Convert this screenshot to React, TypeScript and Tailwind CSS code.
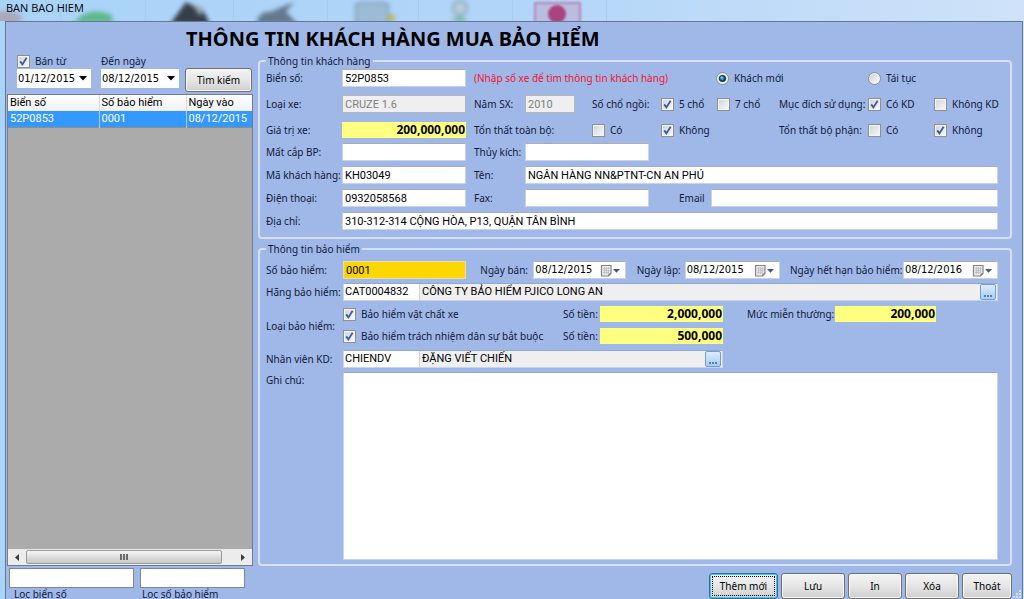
import type { ReactNode } from "react";
import clsx from "clsx";

const FORM_GRID =
  "grid auto-rows-[18px] items-center grid-cols-[76px_132px_51px_67px_69px_56px_62px_89px_66px_1fr]";

type CheckProps = {
  label: string;
  checked?: boolean;
};

function Check({ label, checked }: CheckProps) {
  return (
    <label className="flex items-center gap-[5px] whitespace-nowrap">
      <span className="grid size-[13px] shrink-0">
        <input
          type="checkbox"
          defaultChecked={checked}
          className="peer col-start-1 row-start-1 size-[13px] appearance-none border border-[#8e8f8f] bg-linear-to-br from-[#cfd4d8] to-[#fafafa] shadow-[inset_0_0_0_1px_#f4f4f4]"
        />
        <svg
          viewBox="0 0 13 13"
          className="pointer-events-none col-start-1 row-start-1 hidden size-[13px] peer-checked:block"
        >
          <path
            d="M3.2 6.4 L5.4 9.4 L9.6 2.8"
            fill="none"
            stroke="#3f5a9e"
            strokeWidth="1.8"
          />
        </svg>
      </span>
      {label}
    </label>
  );
}

function Radio({ label, checked }: CheckProps) {
  return (
    <label className="flex items-center gap-[5px] whitespace-nowrap">
      <span className="grid size-[13px] shrink-0">
        <input
          type="radio"
          name="customerType"
          defaultChecked={checked}
          className="peer col-start-1 row-start-1 size-[13px] appearance-none rounded-full border border-[#8e8f8f] bg-linear-to-br from-[#c8cdd1] to-white shadow-[inset_0_0_0_1px_#f4f4f4]"
        />
        <svg
          viewBox="0 0 13 13"
          className="pointer-events-none col-start-1 row-start-1 hidden size-[13px] peer-checked:block"
        >
          <circle cx="6.5" cy="6.5" r="3.6" fill="#123c5c" />
          <circle cx="6.2" cy="6.2" r="2" fill="#2f8fbe" />
          <circle cx="5.6" cy="5.4" r="1" fill="#a5e0f5" />
        </svg>
      </span>
      {label}
    </label>
  );
}

type FieldProps = {
  id: string;
  value?: string;
  disabled?: boolean;
  className?: string;
};

function Field({ id, value = "", disabled, className }: FieldProps) {
  return (
    <input
      id={id}
      type="text"
      defaultValue={value}
      disabled={disabled}
      className={clsx(
        "h-[18px] min-w-0 border px-[2px] font-[Roboto,sans-serif] text-[11px] leading-4 outline-none",
        disabled
          ? "border-[#b5b5b5] bg-[#efefef] text-[#7d7d7d]"
          : "border-[#c9d3e6] border-t-[#abadb3] bg-white text-black",
        className
      )}
    />
  );
}

function Money({ id, value, className }: FieldProps) {
  return (
    <input
      id={id}
      type="text"
      defaultValue={value}
      className={clsx(
        "h-4 min-w-0 bg-[#ffff80] pr-px text-right text-[12px] leading-4 font-bold text-black outline-none",
        className
      )}
    />
  );
}

function DateField({ id, value = "", className }: FieldProps) {
  return (
    <div
      className={clsx(
        "flex h-[18px] items-center border border-[#c9d3e6] border-t-[#abadb3] bg-white pr-1",
        className
      )}
    >
      <input
        id={id}
        type="text"
        defaultValue={value}
        className="w-0 min-w-0 flex-1 pl-px font-['DejaVu_Sans_Condensed',sans-serif] text-[11px] text-black outline-none"
      />
      <button type="button" aria-label="Calendar" className="shrink-0">
        <svg viewBox="0 0 21 13" className="h-[13px] w-[21px]">
          <path
            d="M1.5 1.5h9.500v8l-2.500 2.500h-7z"
            fill="#e9eaf0"
            stroke="#8c8187"
            strokeWidth="1.200"
          />
          <path
            d="M3 4.500h6.500M3 6.500h6.500M3 8.500h5M4.500 3v7M6.500 3v7M8.500 3v6"
            stroke="#b9b7c2"
            strokeWidth="0.700"
          />
          <path d="M11 9.500l-2.500 2.500v-2.500z" fill="#7d7377" />
          <path d="M13 5h7l-3.500 3.800z" fill="#41587f" />
        </svg>
      </button>
    </div>
  );
}

function FilterDate({ id, value = "", className }: FieldProps) {
  return (
    <div
      className={clsx("flex h-[19px] items-center bg-white pr-1", className)}
    >
      <input
        id={id}
        type="text"
        defaultValue={value}
        className="w-0 min-w-0 flex-1 pl-px font-['DejaVu_Sans_Condensed',sans-serif] text-[11px] text-black outline-none"
      />
      <button type="button" aria-label="Open" className="shrink-0">
        <svg viewBox="0 0 8 5" className="h-[5px] w-2">
          <path d="M0 0h8L4 4.500z" fill="#000" />
        </svg>
      </button>
    </div>
  );
}

type LookupProps = {
  id: string;
  code: string;
  name: string;
  className?: string;
};

function Lookup({ id, code, name, className }: LookupProps) {
  return (
    <div
      className={clsx(
        "flex h-[18px] items-center border border-[#c9d3e6] border-t-[#8fa9cf] bg-[#efefef] pr-px font-[Roboto,sans-serif]",
        className
      )}
    >
      <input
        id={id}
        type="text"
        defaultValue={code}
        className="h-4 w-[76px] border-r border-[#c9d3e6] bg-white px-px text-[11px] text-black outline-none"
      />
      <input
        type="text"
        aria-label={name}
        defaultValue={name}
        readOnly
        className="h-4 w-0 min-w-0 flex-1 px-[2px] text-[11px] text-black outline-none"
      />
      <button
        type="button"
        aria-label="Browse"
        className="flex h-4 w-4 items-end justify-center gap-px rounded-xs border border-[#6f9fd0] bg-linear-to-b from-[#dcebfc] to-[#a9cdf6] pb-[2px]"
      >
        <span className="size-[2px] bg-[#5d7fae]" />
        <span className="size-[2px] bg-[#5d7fae]" />
        <span className="size-[2px] bg-[#5d7fae]" />
      </button>
    </div>
  );
}

function Group({
  title,
  className,
  children,
}: {
  title: string;
  className?: string;
  children: ReactNode;
}) {
  return (
    <fieldset
      className={clsx(
        "min-w-0 rounded-[4px] border-2 border-[#d5e0f5] pr-[12px] pl-[6px]",
        className
      )}
    >
      <legend className="h-4 px-[2px] leading-4">{title}</legend>
      {children}
    </fieldset>
  );
}

function PushButton({
  children,
  primary,
  className,
}: {
  children: ReactNode;
  primary?: boolean;
  className?: string;
}) {
  return (
    <button
      type="button"
      className={clsx(
        "rounded-[3px] border bg-linear-to-b from-[#f3f3f3] via-[#e6e6e6] to-[#cfcfcf] p-[2px] text-black",
        primary
          ? "border-[#2a6f9e] shadow-[inset_0_0_0_1px_#43c4ee]"
          : "border-[#707070] shadow-[inset_0_0_0_1px_#f8f8f8]",
        className
      )}
    >
      <span
        className={clsx(
          "flex h-full items-center justify-center",
          primary && "border border-dotted border-black"
        )}
      >
        {children}
      </span>
    </button>
  );
}

/* Toolbar of the window behind, seen through the glass title bar */
function GlassBackdrop() {
  return (
    <svg
      width="1024"
      height="21"
      viewBox="0 0 1024 21"
      className="absolute top-0 left-0"
      aria-hidden="true"
    >
      <g style={{ filter: "blur(2px)" }}>
        <ellipse cx="4" cy="18" rx="18" ry="7" fill="#a9a9b8" />
        <path d="M76 20q14 -14 36 -5v8h-36z" fill="#5fb98d" />
        <path d="M170 24l16 -22 18 10 6 12z" fill="#353f49" />
        <path d="M192 4l12 4 -4 8z" fill="#9ca9b3" />
        <path d="M256 24q4 -14 14 -12l24 -10 -8 10 12 12z" fill="#64798e" />
        <rect x="356" y="3" width="32" height="22" rx="3" fill="#9dbbd6" stroke="#839fbb" strokeWidth="2" />
        <circle cx="391" cy="18" r="4" fill="#b7b76c" />
        <circle cx="460" cy="8" r="7" fill="#b9cdda" stroke="#8ba5ba" strokeWidth="2" />
        <path d="M452 21q8 -8 15 0z" fill="#62b781" />
      </g>
      <g style={{ filter: "blur(1px)" }}>
        <rect x="535" y="3" width="45" height="24" fill="#b9bddf" stroke="#b688b8" strokeWidth="2" />
        <circle cx="557" cy="14" r="9" fill="#a9447f" />
      </g>
      <g stroke="#a9ccec">
        <path d="M60.500 0v21M145.500 0v21M233.500 0v21M327.500 0v21M418.500 0v21M512.500 0v21M606.500 0v21" />
      </g>
    </svg>
  );
}

function LeftPanel() {
  return (
    <aside className="flex w-[247px] shrink-0 flex-col pl-px">
      <div className="flex h-[41px] pl-[10px]">
        <div className="w-[84px]">
          <div className="flex h-4 items-center">
            <Check label="Bán từ" checked />
          </div>
          <FilterDate id="fromDate" value="01/12/2015" className="w-[74px]" />
        </div>
        <div className="w-[84px]">
          <label htmlFor="toDate" className="flex h-4 items-center">
            Đến ngày
          </label>
          <FilterDate id="toDate" value="08/12/2015" className="w-[78px]" />
        </div>
        <PushButton className="mt-[15px] h-6 w-[67px]">Tìm kiếm</PushButton>
      </div>

      <div className="flex flex-1 flex-col border border-[#6f7c90] bg-[#ababab]">
        <table className="w-full table-fixed border-collapse text-left font-[Roboto,sans-serif] text-[11px]">
          <thead>
            <tr className="h-4 bg-linear-to-b from-white to-[#eef0f3] text-black">
              <th className="w-[91px] border-r border-[#d8dade] p-0 pl-[2px] font-normal">Biển số</th>
              <th className="w-[87px] border-r border-[#d8dade] p-0 pl-[2px] font-normal">Số bảo hiểm</th>
              <th className="p-0 pl-[2px] font-normal">Ngày vào</th>
            </tr>
          </thead>
          <tbody>
            <tr className="h-4 border-b border-[#8d8d8d] bg-[#3399ff] text-white">
              <td className="border-r border-[#b5cdea] p-0 pl-[2px]">52P0853</td>
              <td className="border-r border-[#b5cdea] p-0 pl-[2px]">0001</td>
              <td className="p-0 pl-[2px]">08/12/2015</td>
            </tr>
          </tbody>
        </table>

        {/* Horizontal scrollbar */}
        <div className="mt-auto flex h-4 items-center bg-[#ececec]">
          <button type="button" aria-label="Scroll left" className="flex w-[18px] justify-center">
            <svg viewBox="0 0 4 7" className="h-[7px] w-1">
              <path d="M4 0v7L0 3.500z" fill="#3c3c3c" />
            </svg>
          </button>
          <div className="flex h-[14px] flex-1 items-center justify-center gap-px rounded-xs border border-[#9a9a9a] bg-linear-to-b from-[#f5f5f5] via-[#dedede] to-[#c8c8c8]">
            <span className="h-[6px] w-[2px] bg-[#6a6a6a]" />
            <span className="h-[6px] w-[2px] bg-[#6a6a6a]" />
            <span className="h-[6px] w-[2px] bg-[#6a6a6a]" />
          </div>
          <button type="button" aria-label="Scroll right" className="ml-3 flex w-[18px] justify-center">
            <svg viewBox="0 0 4 7" className="h-[7px] w-1">
              <path d="M0 0v7L4 3.500z" fill="#3c3c3c" />
            </svg>
          </button>
        </div>
      </div>

      <div className="flex h-[33px] gap-[6px] pt-[2px] pl-[2px]">
        <div className="w-[125px]">
          <input id="filterPlate" type="text" className="h-5 w-full border border-[#7c8798] bg-white px-1 outline-none" />
          <label htmlFor="filterPlate" className="block pl-[5px] leading-3">
            Lọc biển số
          </label>
        </div>
        <div className="w-[105px]">
          <input id="filterPolicy" type="text" className="h-5 w-full border border-[#7c8798] bg-white px-1 outline-none" />
          <label htmlFor="filterPolicy" className="block pl-[2px] leading-3">
            Lọc số bảo hiểm
          </label>
        </div>
      </div>
    </aside>
  );
}

function CustomerInfo() {
  return (
    <Group title="Thông tin khách hàng" className="pb-[7px]">
      <div className={clsx(FORM_GRID, "gap-y-2")}>
        <label htmlFor="plate">Biển số:</label>
        <Field id="plate" value="52P0853" className="w-[124px]" />
        <span className="col-span-4 text-[#f0142d]">
          (Nhập số xe để tìm thông tin khách hàng)
        </span>
        <div className="col-span-2 -ml-px">
          <Radio label="Khách mới" checked />
        </div>
        <div className="col-span-2">
          <Radio label="Tái tục" />
        </div>

        <label htmlFor="model">Loại xe:</label>
        <Field id="model" value="CRUZE 1.6" disabled className="w-[124px]" />
        <label htmlFor="year">Năm SX:</label>
        <Field id="year" value="2010" disabled className="w-[50px]" />
        <span>Số chổ ngồi:</span>
        <Check label="5 chổ" checked />
        <Check label="7 chổ" />
        <span className="whitespace-nowrap">Mục đích sử dụng:</span>
        <Check label="Có KD" checked />
        <Check label="Không KD" />

        <label htmlFor="price">Giá trị xe:</label>
        <Money id="price" value="200,000,000" className="w-[124px]" />
        <span className="col-span-2">Tổn thất toàn bộ:</span>
        <Check label="Có" />
        <div className="col-span-2">
          <Check label="Không" checked />
        </div>
        <span className="whitespace-nowrap">Tổn thất bộ phận:</span>
        <Check label="Có" />
        <Check label="Không" checked />
      </div>

      <div className={clsx(FORM_GRID, "mt-1 gap-y-[5px]")}>
        <label htmlFor="theft">Mất cắp BP:</label>
        <Field id="theft" className="w-[124px]" />
        <label htmlFor="flood" className="whitespace-nowrap">Thủy kích:</label>
        <div className="col-span-7 flex">
          <Field id="flood" className="w-[124px]" />
        </div>

        <label htmlFor="customerCode" className="whitespace-nowrap">Mã khách hàng:</label>
        <Field id="customerCode" value="KH03049" className="w-[124px]" />
        <label htmlFor="customerName">Tên:</label>
        <Field id="customerName" value="NGÂN HÀNG NN&PTNT-CN AN PHÚ" className="col-span-7" />

        <label htmlFor="phone">Điện thoại:</label>
        <Field id="phone" value="0932058568" className="w-[124px]" />
        <label htmlFor="fax">Fax:</label>
        <div className="col-span-7 flex items-center">
          <Field id="fax" className="w-[124px]" />
          <label htmlFor="email" className="w-[62px] pl-[30px]">Email</label>
          <Field id="email" className="flex-1" />
        </div>

        <label htmlFor="address">Địa chỉ:</label>
        <Field
          id="address"
          value="310-312-314 CỘNG HÒA, P13, QUẬN TÂN BÌNH"
          className="col-span-9"
        />
      </div>
    </Group>
  );
}

function InsuranceInfo() {
  return (
    <Group title="Thông tin bảo hiểm" className="mt-[2px] flex flex-1 flex-col pb-1">
      <div className="grid h-full grid-cols-[77px_1fr] grid-rows-[auto_auto_auto_auto_1fr] items-center gap-y-1 pt-1">
        <label htmlFor="policyNo">Số bảo hiểm:</label>
        <div className="flex items-center justify-between">
          <input
            id="policyNo"
            type="text"
            defaultValue="0001"
            className="h-[18px] w-[123px] border border-[#e3dcc0] bg-[#ffd700] px-[2px] font-[Roboto,sans-serif] text-[11px] text-black outline-none"
          />
          <div className="ml-1 flex items-center">
            <label htmlFor="soldDate" className="w-[53px] whitespace-nowrap">Ngày bán:</label>
            <DateField id="soldDate" value="08/12/2015" className="w-[93px]" />
          </div>
          <div className="flex items-center">
            <label htmlFor="issueDate" className="w-12 whitespace-nowrap">Ngày lập:</label>
            <DateField id="issueDate" value="08/12/2015" className="w-[95px]" />
          </div>
          <div className="flex items-center">
            <label htmlFor="expiryDate" className="w-[113px] whitespace-nowrap">Ngày hết hạn bảo hiểm:</label>
            <DateField id="expiryDate" value="08/12/2016" className="w-[95px]" />
          </div>
        </div>

        <label htmlFor="insurer" className="whitespace-nowrap">Hãng bảo hiểm:</label>
        <Lookup id="insurer" code="CAT0004832" name="CÔNG TY BẢO HIỂM PJICO LONG AN" />

        <span className="whitespace-nowrap">Loại bảo hiểm:</span>
        <div className="grid grid-cols-[220px_37px_147px_88px_101px] gap-y-[6px] pt-px pb-[2px]">
          <Check label="Bảo hiểm vật chất xe" checked />
          <label htmlFor="amount1" className="whitespace-nowrap">Số tiền:</label>
          <Money id="amount1" value="2,000,000" className="w-[123px]" />
          <label htmlFor="deductible" className="whitespace-nowrap">Mức miễn thường:</label>
          <Money id="deductible" value="200,000" />
          <Check label="Bảo hiểm trách nhiệm dân sự bắt buộc" checked />
          <label htmlFor="amount2" className="whitespace-nowrap">Số tiền:</label>
          <Money id="amount2" value="500,000" className="w-[123px]" />
        </div>

        <label htmlFor="staff" className="whitespace-nowrap">Nhân viên KD:</label>
        <Lookup id="staff" code="CHIENDV" name="ĐẶNG VIẾT CHIẾN" className="w-[380px]" />

        <label htmlFor="note" className="self-start">Ghi chú:</label>
        <textarea
          id="note"
          className="h-full w-full resize-none self-stretch border border-[#c9d3e6] border-t-[#8fa9cf] bg-white p-1 outline-none"
        />
      </div>
    </Group>
  );
}

export default function App() {
  return (
    <div className="flex h-screen flex-col overflow-hidden bg-linear-to-r from-[#a9d3f8] via-[#b1d5f8] to-[#cfe2f9] font-['Noto_Sans',sans-serif] text-[10px] leading-4 text-[#10183a]">
      <header className="relative h-[21px] shrink-0">
        <GlassBackdrop />
        <p className="relative pl-[6px] font-['Open_Sans',sans-serif] text-[11px] leading-4 text-black">
          BAN BAO HIEM
        </p>
      </header>

      <main className="mr-px ml-[5px] flex min-h-0 flex-1 flex-col border border-b-0 border-[#66788f] bg-[#9fb8e8]">
        <h1 className="h-[31px] shrink-0 pl-[180px] text-[20px] leading-[33px] font-bold text-black">
          THÔNG TIN KHÁCH HÀNG MUA BẢO HIỂM
        </h1>

        <div className="flex min-h-0 flex-1 gap-[5px] pr-[10px]">
          <LeftPanel />

          <div className="flex min-w-0 flex-1 flex-col">
            <CustomerInfo />
            <InsuranceInfo />

            <div className="flex h-[33px] shrink-0 justify-end gap-[3px] pt-[7px]">
              <PushButton primary className="w-[69px]">Thêm mới</PushButton>
              <PushButton className="w-16">Lưu</PushButton>
              <PushButton className="w-[54px]">In</PushButton>
              <PushButton className="w-[54px]">Xóa</PushButton>
              <PushButton className="w-[50px]">Thoát</PushButton>
            </div>
          </div>
        </div>
      </main>

      {/* Resize grip */}
      <svg viewBox="0 0 9 9" className="absolute right-[2px] bottom-0 size-[9px]" aria-hidden="true">
        <path d="M6 0h2v2h-2zM6 3h2v2h-2zM3 3h2v2h-2zM6 6h2v2h-2zM3 6h2v2h-2zM0 6h2v2h-2z" fill="#d3e0f6" />
      </svg>
    </div>
  );
}
